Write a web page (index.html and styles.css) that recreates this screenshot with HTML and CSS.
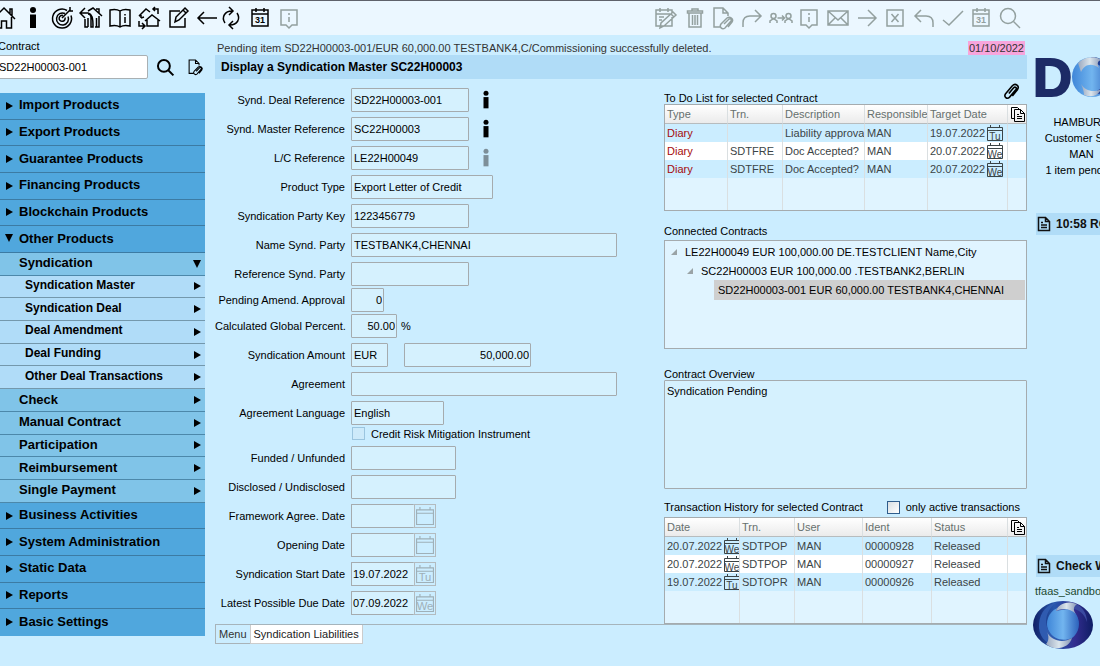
FILE: index.html
```html
<!DOCTYPE html>
<html lang="en">
<head>
<meta charset="utf-8">
<title>Display a Syndication Master</title>
<link rel="stylesheet" href="styles.css">
</head>
<body>
<svg class="sprite" aria-hidden="true">
  <symbol id="home" viewBox="0 0 24 24"><path d="M1 13 12 2l11 11M4.500 11v11h5v-7h5v7h5V11M18 8V3h2v7"/></symbol>
  <symbol id="info" viewBox="0 0 24 24"><g fill="currentColor" stroke="none"><circle cx="12" cy="4" r="3"/><path d="M9 8.500h6V22H9z"/></g></symbol>
  <symbol id="target" viewBox="0 0 24 24"><path d="M17 4.500a9.500 9.500 0 1 0 4 5M15 7.500a6 6 0 1 0 3 3M13 9.500a3 3 0 1 0 2 2M12 12l8-8M20 1v4h3"/></symbol>
  <symbol id="house-back" viewBox="0 0 24 24"><path d="M1 7h8c4 1 5 4 5 14h-2V12c0-2-1-4-3-4M6 2 1 7l5 5M9 5l5-3 9 8M6 13v8h3M9 12v9M20 10v11h-4M17.500 12v9M17 3h3v4"/></symbol>
  <symbol id="book" viewBox="0 0 24 24"><path d="M12 5C9 3 6 3 2 4v16c4-1 7-1 10 1 3-2 6-2 10-1V4c-4-1-7-1-10 1zm0 0v16M17 8v1.500M17 11v6"/></symbol>
  <symbol id="houses" viewBox="0 0 24 24"><path d="M4 12V9L2 10l7-7 4 3M4 12l3-1M16 3h5v5M18 1l-2 2 2 2M8 15l7-6 8 6M10 14v6h11v-6M2 15v5h5M5 17l3 3-3 3"/></symbol>
  <symbol id="edit" viewBox="0 0 24 24"><path d="M14 5H4v16h15v-9M9 16l1-5 9-9 3 3-9 9zM17 4l3 3"/></symbol>
  <symbol id="left" viewBox="0 0 24 24"><path d="M22 12H4M9 6l-6 6 6 6"/></symbol>
  <symbol id="right" viewBox="0 0 24 24"><path d="M3 12h18M13 4l8 8-8 8"/></symbol>
  <symbol id="refresh" viewBox="0 0 24 24"><path d="M6 17C2 11 6 5 13 5M10 1l4 4-4 4M18 7c4 6 0 12-7 12M14 15l-4 4 4 4"/></symbol>
  <symbol id="calendar" viewBox="0 0 24 24"><path d="M4 4h16v16H4zM4 8h16M8 2v4M16 2v4"/><text x="12" y="17" class="cal-num">31</text></symbol>
  <symbol id="note" viewBox="0 0 24 24"><path d="M4 4h16v15h-5l-3 3-3-3H4zM12 7v2M12 11v5"/></symbol>
  <symbol id="cal-edit" viewBox="0 0 24 24"><path d="M18 11v9H2V4h16v3M2 8h14M6 2v4M14 2v4M5 11h5M5 14h3M6 22l1-5L19 6l3 3L10 20zM17 8l3 3"/></symbol>
  <symbol id="trash" viewBox="0 0 24 24"><path d="M6 7h12v14H6zM4.500 5h15v2h-15zM9 5V3h6v2M9.500 9v10M12 9v10M14.500 9v10"/></symbol>
  <symbol id="doc-clip" viewBox="0 0 24 24"><path d="M9 21H3V2h9l5 5v3M12 2v5h5M13 18l5-5c2-1 3 1 2 2l-6 7c-3 2-6-1-4-4l6-6c3-2 7 1 5 4l-4 5"/></symbol>
  <symbol id="forward" viewBox="0 0 24 24"><path d="M3 21v-4c0-5 3-7 7-7h11M15 4l6 6-6 6"/></symbol>
  <symbol id="back" viewBox="0 0 24 24"><path d="M21 21v-4c0-5-3-7-7-7H3M9 4l-6 6 6 6"/></symbol>
  <symbol id="people" viewBox="0 0 24 24"><path d="M1 17v-2l3-2h1l3 2v2M16 17v-2l3-2h1l3 2v2M8.500 12h7M13 9.500l2.500 2.500-2.500 2.500"/><circle cx="4.500" cy="10" r="2.500"/><circle cx="19.500" cy="10" r="2.500"/></symbol>
  <symbol id="mail" viewBox="0 0 24 24"><path d="M2 5h20v14H2zM2 5l10 9L22 5M2 19l7-7M22 19l-7-7"/></symbol>
  <symbol id="close" viewBox="0 0 24 24"><path d="M4 4h16v16H4zM8.500 8l7 8M15.500 8l-7 8"/></symbol>
  <symbol id="check" viewBox="0 0 24 24"><path d="M2 14l6 5L22 5"/></symbol>
  <symbol id="search" viewBox="0 0 24 24"><circle cx="10" cy="10" r="7.500"/><path d="M15.500 15.500 22 22"/></symbol>
  <symbol id="clip" viewBox="0 0 18 18"><path d="M6.500 11 11 5.500c1.500-1.500 3.300 0 2.200 1.600l-6 7.200c-2.500 2.500-5.800-.3-3.800-3.200l6.400-7.600c3-3 7.200.3 4.800 3.800l-4.800 5.900"/></symbol>
  <symbol id="copy" viewBox="0 0 16 16"><path d="M4 12.500H1.500v-11h6l2 2M4.500 3.500h6l4 4v8h-10zM10.500 3.500v4h4M7 8.500h2M7 10.500h5M7 12.500h5"/></symbol>
  <symbol id="page" viewBox="0 0 16 16"><path d="M2.500 1.500h7l4 4v9h-11zM9.500 1.500v4h4M5 6.500h2M5 9h6M5 11.500h6"/></symbol>
  <symbol id="blank-day" viewBox="0 0 16 16"><path d="M.5 2.500h15v13H.5zM.5 5.500h15M3.500 0v3M12.500 0v3"/></symbol>
  <symbol id="tu" viewBox="0 0 16 16"><path d="M.5 2.500h15v13H.5zM.5 5.500h15M3.500 0v3M12.500 0v3"/><text x="8" y="14.500" class="cal-day">Tu</text></symbol>
  <symbol id="we" viewBox="0 0 16 16"><path d="M.5 2.500h15v13H.5zM.5 5.500h15M3.500 0v3M12.500 0v3"/><text x="8" y="14.500" class="cal-day">We</text></symbol>
</svg>
<svg class="paints" aria-hidden="true">
  <linearGradient id="globe-dark" x1="0" x2="1"><stop offset="0" stop-color="#101f66"/><stop offset=".35" stop-color="#2758ad"/><stop offset=".7" stop-color="#332d8f"/><stop offset="1" stop-color="#0e1d64"/></linearGradient>
  <linearGradient id="globe-light" x1="0" x2="1"><stop offset="0" stop-color="#3f86d8"/><stop offset=".5" stop-color="#72b5ef"/><stop offset="1" stop-color="#2c61bb"/></linearGradient>
  <linearGradient id="globe-silver" x1="0" x2="1"><stop offset="0" stop-color="#9aa8c0"/><stop offset=".5" stop-color="#dbe5ec"/><stop offset="1" stop-color="#8595b5"/></linearGradient>
  <symbol id="globe" viewBox="0 0 60 48" preserveAspectRatio="none">
    <ellipse cx="30" cy="24" rx="30" ry="24" fill="url(#globe-dark)"/>
    <ellipse cx="30" cy="23" rx="16" ry="17" fill="url(#globe-light)"/>
    <path d="M23 10C25 3 33 0 41 2c8 3 13 10 13 19-3-9-10-14-17-13-5 0-9 1-14 2z" fill="#3a4aa0"/>
    <path d="M23 10C25 3 34-1 44 3c-4 3-4 6-1 10-6-6-14-6-20-3z" fill="url(#globe-silver)"/>
    <path d="M25 1C14 7 10 20 16 30c4 8 14 11 23 7-3 6-9 9-16 8C12 43 5 34 6 23 7 11 14 3 25 1z" fill="#2f5bb0"/>
    <path d="M14 31c4 8 15 12 25 6-2 7-9 11-18 10-3-1-6-2-8-4 3-3 3-8 1-12z" fill="url(#globe-silver)"/>
  </symbol>
  <symbol id="brand-globe" viewBox="0 0 40 40">
    <circle cx="20" cy="20" r="20" fill="url(#globe-light)"/>
    <path d="M16 8C22 4 32 8 33 18s-4 14-12 18c14 4 19-8 19-16S32 0 20 0c-3 2-4 4-4 8z" fill="#1f3f94"/>
    <path d="M6 6C13-1 24-1 30 3c-5 1-5 4-3 8C19 5 12 8 9 15z" fill="url(#globe-silver)"/>
    <path d="M9 27c4 7 13 9 20 5-2 6-9 9-17 6 0-3-1-7-3-11z" fill="url(#globe-silver)"/>
  </symbol>
</svg>

<div class="shell">
  <header class="toolbar">
    <div class="tools">
      <button aria-label="Home"><svg><use href="#home"/></svg></button>
      <button aria-label="Information"><svg><use href="#info"/></svg></button>
      <button aria-label="Target"><svg><use href="#target"/></svg></button>
      <button aria-label="Return"><svg><use href="#house-back"/></svg></button>
      <button aria-label="Manual"><svg><use href="#book"/></svg></button>
      <button aria-label="Switch entity"><svg><use href="#houses"/></svg></button>
      <button aria-label="Edit"><svg><use href="#edit"/></svg></button>
      <button aria-label="Back"><svg><use href="#left"/></svg></button>
      <button aria-label="Refresh" class="close-up"><svg><use href="#refresh"/></svg></button>
      <button aria-label="Calendar"><svg><use href="#calendar"/></svg></button>
      <button aria-label="Note" class="muted"><svg><use href="#note"/></svg></button>
    </div>
    <div class="tools tools-end muted">
      <button aria-label="Edit diary"><svg><use href="#cal-edit"/></svg></button>
      <button aria-label="Delete"><svg><use href="#trash"/></svg></button>
      <button aria-label="Attach document"><svg><use href="#doc-clip"/></svg></button>
      <button aria-label="Forward"><svg><use href="#forward"/></svg></button>
      <button aria-label="Reassign"><svg><use href="#people"/></svg></button>
      <button aria-label="Note"><svg><use href="#note"/></svg></button>
      <button aria-label="Mail"><svg><use href="#mail"/></svg></button>
      <button aria-label="Next"><svg><use href="#right"/></svg></button>
      <button aria-label="Close"><svg><use href="#close"/></svg></button>
      <button aria-label="Undo"><svg><use href="#back"/></svg></button>
      <button aria-label="Confirm"><svg><use href="#check"/></svg></button>
      <button aria-label="Calendar"><svg><use href="#calendar"/></svg></button>
      <button aria-label="Search"><svg><use href="#search"/></svg></button>
    </div>
  </header>

  <div class="columns">
    <div class="sidebar">
      <label class="contract-label" for="contract">Contract</label>
      <div class="contract-row">
        <input id="contract" class="contract-input" value="SD22H00003-001">
        <button aria-label="Search contract"><svg class="icon-search"><use href="#search"/></svg></button>
        <button aria-label="Contract documents"><svg class="icon-doc"><use href="#doc-clip"/></svg></button>
      </div>
      <nav class="nav">
        <a href="#" class="top">Import Products</a>
        <a href="#" class="top">Export Products</a>
        <a href="#" class="top">Guarantee Products</a>
        <a href="#" class="top">Financing Products</a>
        <a href="#" class="top">Blockchain Products</a>
        <a href="#" class="top open">Other Products</a>
        <a href="#" class="sub open">Syndication</a>
        <a href="#" class="sub leaf">Syndication Master</a>
        <a href="#" class="sub leaf">Syndication Deal</a>
        <a href="#" class="sub leaf">Deal Amendment</a>
        <a href="#" class="sub leaf">Deal Funding</a>
        <a href="#" class="sub leaf">Other Deal Transactions</a>
        <a href="#" class="sub">Check</a>
        <a href="#" class="sub">Manual Contract</a>
        <a href="#" class="sub">Participation</a>
        <a href="#" class="sub">Reimbursement</a>
        <a href="#" class="sub">Single Payment</a>
        <a href="#" class="top">Business Activities</a>
        <a href="#" class="top">System Administration</a>
        <a href="#" class="top">Static Data</a>
        <a href="#" class="top">Reports</a>
        <a href="#" class="top">Basic Settings</a>
      </nav>
    </div>

    <main class="main">
      <div class="message"><span>Pending item SD22H00003-001/EUR 60,000.00 TESTBANK4,C/Commissioning successfully deleted.</span><span class="today">01/10/2022</span></div>
      <h1 class="title">Display a Syndication Master SC22H00003</h1>
      <div class="workspace">
        <form class="form">
          <div class="row"><label for="f1">Synd. Deal Reference</label><input id="f1" class="field w-ref" value="SD22H00003-001" readonly><button type="button" class="info-btn" aria-label="Deal information"><svg><use href="#info"/></svg></button></div>
          <div class="row"><label for="f2">Synd. Master Reference</label><input id="f2" class="field w-ref" value="SC22H00003" readonly><button type="button" class="info-btn" aria-label="Master information"><svg><use href="#info"/></svg></button></div>
          <div class="row"><label for="f3">L/C Reference</label><input id="f3" class="field w-ref" value="LE22H00049" readonly><button type="button" class="info-btn info-off" aria-label="L/C information"><svg><use href="#info"/></svg></button></div>
          <div class="row"><label for="f4">Product Type</label><select id="f4" class="field w-type"><option>Export Letter of Credit</option></select></div>
          <div class="row"><label for="f5">Syndication Party Key</label><input id="f5" class="field w-ref" value="1223456779" readonly></div>
          <div class="row"><label for="f6">Name Synd. Party</label><input id="f6" class="field w-wide" value="TESTBANK4,CHENNAI" readonly></div>
          <div class="row tight"><label for="f7">Reference Synd. Party</label><input id="f7" class="field w-ref" readonly></div>
          <div class="row tight"><label for="f8">Pending Amend. Approval</label><input id="f8" class="field w-count num" value="0" readonly></div>
          <div class="row"><label for="f9">Calculated Global Percent.</label><input id="f9" class="field w-pct num" value="50.00" readonly><span class="unit">%</span></div>
          <div class="row"><label for="f10">Syndication Amount</label><select id="f10" class="field w-cur"><option>EUR</option></select><input class="field w-amount num" aria-label="Amount" value="50,000.00" readonly></div>
          <div class="row"><label for="f11">Agreement</label><select id="f11" class="field w-wide"><option></option></select></div>
          <div class="row tight"><label for="f12">Agreement Language</label><select id="f12" class="field w-lang"><option>English</option></select></div>
          <div class="row check-row"><input type="checkbox" id="f13" class="tick tick-off"><label for="f13">Credit Risk Mitigation Instrument</label></div>
          <div class="row"><label for="f14">Funded / Unfunded</label><select id="f14" class="field w-fund"><option></option></select></div>
          <div class="row"><label for="f15">Disclosed / Undisclosed</label><select id="f15" class="field w-fund"><option></option></select></div>
          <div class="row"><label for="f16">Framework Agree. Date</label><input id="f16" class="field w-date" readonly><button type="button" class="day-btn" aria-label="Pick date"><svg><use href="#blank-day"/></svg></button></div>
          <div class="row"><label for="f17">Opening Date</label><input id="f17" class="field w-date" readonly><button type="button" class="day-btn" aria-label="Pick date"><svg><use href="#blank-day"/></svg></button></div>
          <div class="row"><label for="f18">Syndication Start Date</label><input id="f18" class="field w-date" value="19.07.2022" readonly><button type="button" class="day-btn" aria-label="Pick date"><svg><use href="#tu"/></svg></button></div>
          <div class="row"><label for="f19">Latest Possible Due Date</label><input id="f19" class="field w-date" value="07.09.2022" readonly><button type="button" class="day-btn" aria-label="Pick date"><svg><use href="#we"/></svg></button></div>
        </form>

        <div class="panels">
          <section>
            <div class="todo-head"><h2>To Do List for selected Contract</h2><button aria-label="Attachments"><svg class="icon-clip"><use href="#clip"/></svg></button></div>
            <table class="grid">
              <colgroup><col class="c63"><col class="c55"><col><col class="c63"><col class="c80"><col class="c18"></colgroup>
              <thead><tr><th>Type</th><th>Trn.</th><th>Description</th><th>Responsible</th><th>Target Date</th><th class="copy"><button aria-label="Copy list"><svg><use href="#copy"/></svg></button></th></tr></thead>
              <tbody>
                <tr><td class="diary">Diary</td><td></td><td>Liability approval</td><td>MAN</td><td><span class="date">19.07.2022<svg><use href="#tu"/></svg></span></td><td></td></tr>
                <tr><td class="diary">Diary</td><td>SDTFRE</td><td>Doc Accepted?</td><td>MAN</td><td><span class="date">20.07.2022<svg><use href="#we"/></svg></span></td><td></td></tr>
                <tr><td class="diary">Diary</td><td>SDTFRE</td><td>Doc Accepted?</td><td>MAN</td><td><span class="date">20.07.2022<svg><use href="#we"/></svg></span></td><td></td></tr>
                <tr class="empty"><td></td><td></td><td></td><td></td><td></td><td></td></tr>
                <tr class="empty"><td></td><td></td><td></td><td></td><td></td><td></td></tr>
              </tbody>
            </table>
          </section>

          <section class="contracts">
            <h2>Connected Contracts</h2>
            <ul class="tree">
              <li class="depth1"><svg class="twist" viewBox="0 0 6 6"><path d="M6 0v6H0z"/></svg>LE22H00049 EUR 100,000.00 DE.TESTCLIENT Name,City</li>
              <li class="depth2"><svg class="twist" viewBox="0 0 6 6"><path d="M6 0v6H0z"/></svg>SC22H00003 EUR 100,000.00 .TESTBANK2,BERLIN</li>
              <li class="depth3">SD22H00003-001 EUR 60,000.00 TESTBANK4,CHENNAI</li>
            </ul>
          </section>

          <section class="overview">
            <h2><label for="overview">Contract Overview</label></h2>
            <textarea id="overview" readonly>Syndication Pending</textarea>
          </section>

          <section class="history">
            <div class="history-head"><h2>Transaction History for selected Contract</h2><input type="checkbox" id="active" class="tick"><label for="active">only active transactions</label></div>
            <table class="grid">
              <colgroup><col class="c75"><col class="c55"><col><col class="c69"><col class="c76"><col class="c18"></colgroup>
              <thead><tr><th>Date</th><th>Trn.</th><th>User</th><th>Ident</th><th>Status</th><th class="copy"><button aria-label="Copy list"><svg><use href="#copy"/></svg></button></th></tr></thead>
              <tbody>
                <tr><td><span class="date">20.07.2022<svg><use href="#we"/></svg></span></td><td>SDTPOP</td><td>MAN</td><td>00000928</td><td>Released</td><td></td></tr>
                <tr><td><span class="date">20.07.2022<svg><use href="#we"/></svg></span></td><td>SDTPOP</td><td>MAN</td><td>00000927</td><td>Released</td><td></td></tr>
                <tr><td><span class="date">19.07.2022<svg><use href="#tu"/></svg></span></td><td>SDTOPR</td><td>MAN</td><td>00000926</td><td>Released</td><td></td></tr>
                <tr class="empty"><td></td><td></td><td></td><td></td><td></td><td></td></tr>
                <tr class="empty"><td></td><td></td><td></td><td></td><td></td><td></td></tr>
              </tbody>
            </table>
          </section>
        </div>
      </div>
      <div class="tabs"><button class="tab">Menu</button><button class="tab current">Syndication Liabilities</button></div>
    </main>

    <aside class="aside">
      <div class="aside-inner">
        <div class="brand"><span>D</span><svg><use href="#brand-globe"/></svg></div>
        <p class="who">HAMBURG<br>Customer Serv<br>MAN<br>1 item pending</p>
        <a href="#" class="aside-link"><svg><use href="#page"/></svg>10:58 RO</a>
        <div class="aside-foot">
          <a href="#" class="aside-link"><svg><use href="#page"/></svg>Check W</a>
          <div class="env">tfaas_sandbox</div>
          <svg class="globe"><use href="#globe"/></svg>
        </div>
      </div>
    </aside>
  </div>
</div>
</body>
</html>
```
FILE: styles.css
```css
* { box-sizing: border-box; }

body {
  margin: 0;
  overflow: hidden;
  background: #cbedff;
  color: #000;
  font: 11px/14px "Liberation Sans", Arial, sans-serif;
}

button {
  display: block;
  padding: 0;
  border: 0;
  background: none;
  color: inherit;
  font: inherit;
}

h1, h2, p, ul { margin: 0; padding: 0; }
h2 { font-size: 11px; font-weight: normal; line-height: 12px; white-space: nowrap; }

svg { display: block; fill: none; stroke: currentColor; stroke-width: 1.5; }
.sprite { display: none; }
.paints { position: absolute; width: 0; height: 0; }
.cal-num, .cal-day {
  fill: currentColor;
  stroke: none;
  text-anchor: middle;
  font-family: "Liberation Sans", sans-serif;
}
.cal-num { font-size: 9px; font-weight: bold; }
.cal-day { font-size: 10px; }

.shell { margin-left: -8px; min-height: 100vh; }

/* Toolbar */
.toolbar {
  display: flex;
  justify-content: space-between;
  align-items: center;
  height: 35px;
  padding-right: 78px;
  border-top: 1px solid #5e626b;
  background: #ebf7ff;
}
.tools { display: flex; gap: 5px; }
.tools-end { width: 368px; gap: 0; justify-content: space-between; }
.tools svg { width: 24px; height: 24px; }
.tools .close-up { margin-left: -5px; }
.muted { color: #93a09f; }

.columns {
  display: grid;
  grid-template-columns: 214px minmax(0, 1fr) 69px;
  min-height: calc(100vh - 35px);
}

/* Sidebar */
.sidebar { padding-top: 4px; }
.contract-label { display: block; margin: 0 0 2px 6px; line-height: 14px; }
.contract-row { display: flex; align-items: center; margin-bottom: 14px; }
.contract-input {
  width: 156px;
  height: 24px;
  margin-right: 8px;
  padding: 0 6px;
  border: 1px solid #a9b0b3;
  border-radius: 2px;
  font: inherit;
}
.icon-search { width: 19px; height: 19px; margin-right: 12px; stroke-width: 2.5; }
.icon-doc { width: 17px; height: 18px; }

.nav {
  display: flex;
  flex-direction: column;
  width: 213px;
  height: calc(100vh - 123px);
  min-height: 480px;
}
.nav a {
  display: flex;
  align-items: center;
  flex: 20 1 0;
  padding: 0 4px 2px 27px;
  border-bottom: 1px solid #4c88aa;
  background: #80c4e8;
  color: #000;
  font-size: 13px;
  font-weight: bold;
  line-height: 15px;
  text-decoration: none;
}
.nav .top { flex-grow: 24; padding-left: 14px; border-bottom-color: #3c7ba3; background: #50a7dd; }
.nav .leaf { padding-left: 33px; border-bottom-color: #7498ac; background: #b0dcf8; font-size: 12px; }
.nav a:last-child { border-bottom-color: #50a7dd; }
.nav a::before, .nav a::after {
  border: 4px solid transparent;
  border-left: 7px solid #000;
  border-right: 0;
}
.nav .top::before { content: ""; margin: 2px 6px 0 0; }
.nav .sub::after { content: ""; margin: 2px 0 0 auto; }
.nav .open::before, .nav .open::after {
  border: 4px solid transparent;
  border-top: 8px solid #000;
  border-bottom: 0;
}
.nav .top.open::before { margin: 0 6px 0 -1px; }

/* Main area */
.main { padding: 2px 4px 0 9px; }
.message {
  display: flex;
  justify-content: space-between;
  align-items: center;
  height: 18px;
  padding: 4px 2px 0;
  color: #333;
  white-space: nowrap;
}
.today { padding: 0 1px; background: #f7a5dc; }
.title {
  height: 24px;
  padding-left: 6px;
  background: #b0dcf7;
  font-size: 12px;
  line-height: 24px;
  white-space: nowrap;
}
.workspace {
  display: grid;
  grid-template-columns: minmax(0, 1fr) 363px;
  border-bottom: 1px solid #a6b4bb;
}

.form { padding-top: 9px; }
.row { display: flex; align-items: center; height: 23px; margin-bottom: 6px; white-space: nowrap; }
.row > label:first-child { width: 130px; margin-right: 6px; text-align: right; }
.row.tight { margin-bottom: 3px; }
.field {
  height: 24px;
  margin: 0;
  padding: 0 3px;
  border: 1px solid #a5abae;
  border-radius: 1px;
  background: #d5f1fe;
  color: #000;
  font: inherit;
  appearance: none;
}
.field, .day-btn { align-self: flex-start; }
select.field, .w-ref { padding: 0 2px; }
.num { padding: 0 1px; text-align: right; }
.w-ref { width: 118px; }
.w-type { width: 142px; }
.w-wide { width: 266px; padding: 0 2px; }
.w-count { width: 33px; }
.w-pct { width: 46px; }
.w-cur { width: 37px; margin-right: 16px; }
.w-amount { width: 127px; }
.w-lang { width: 93px; }
.w-fund { width: 105px; }
.w-date { width: 63px; padding: 0 1px; border-right: 0; }
.unit { margin-left: 4px; }
.info-btn { margin-left: 7px; }
.info-btn svg { width: 20px; height: 20px; }
.info-off { color: #7d8f99; }
.day-btn { width: 22px; height: 24px; padding: 1px; border: 1px solid #b3bbbf; color: #9fb0b8; }
.day-btn svg { width: 18px; height: 20px; stroke-width: 1; }
.row.check-row { height: 13px; padding-left: 137px; gap: 6px; }

.tick {
  width: 13px;
  height: 13px;
  margin: 0;
  border: 1px solid #2f5d8c;
  background: linear-gradient(135deg, #d8dfe3, #fff);
  appearance: none;
}
.tick-off { border-color: #9bc5df; background: #cdeafa; }

/* Right-hand panels */
.todo-head { display: flex; justify-content: space-between; align-items: flex-end; height: 25px; }
.icon-clip { width: 19px; height: 19px; margin: 0 6px 3px 0; }

.grid {
  width: 100%;
  table-layout: fixed;
  border-collapse: separate;
  border-spacing: 0;
  border: 1px solid #a5abae;
  background: #e0f4ff;
  color: #3b4446;
}
.grid th, .grid td {
  height: 18px;
  padding: 0 0 0 2px;
  border-right: 1px solid #dadfe1;
  overflow: hidden;
  font-weight: normal;
  line-height: 16px;
  text-align: left;
  white-space: nowrap;
}
.grid th {
  height: 19px;
  border-bottom: 1px solid #b7bcbe;
  background: linear-gradient(#fff, #ebebeb);
  color: #66706e;
}
.grid th:last-child, .grid td:last-child { border-right: 0; }
.grid tbody tr { background: #cbedff; }
.grid tbody tr:nth-child(2) { background: #fff; }
.grid tbody tr.empty { background: #e0f4ff; }
.grid tr.empty td { height: 16px; }
.grid .diary { color: #a50b0b; }
.copy svg { width: 16px; height: 16px; color: #000; stroke-width: 1; }
.date { display: flex; align-items: center; gap: 2px; }
.date svg { width: 16px; height: 16px; flex: none; stroke-width: 1; }
.c18 { width: 18px; }
.c55 { width: 55px; }
.c63 { width: 63px; }
.c69 { width: 69px; }
.c75 { width: 75px; }
.c76 { width: 76px; }
.c80 { width: 80px; }

.contracts { margin-top: 14px; }
.contracts h2 { padding-bottom: 3px; }
.tree {
  height: 109px;
  padding: 1px 1px 0 6px;
  border: 1px solid #a5abae;
  background: #e0f4ff;
  list-style: none;
}
.tree li { display: flex; align-items: center; gap: 8px; height: 19px; white-space: nowrap; }
.twist { width: 6px; height: 6px; fill: #9aa3a6; stroke: none; }
.depth2 { margin-left: 16px; }
.tree .depth3 { height: 20px; margin-left: 43px; padding-left: 4px; background: #cfcfcf; }

.overview { margin-top: 19px; }
.overview textarea {
  display: block;
  width: 100%;
  height: 109px;
  padding: 3px 2px;
  border: 1px solid #a5abae;
  border-radius: 1px;
  background: #d5f1fe;
  color: #000;
  font: inherit;
  resize: none;
}
.history { margin-top: 11px; }
.history-head { display: flex; align-items: center; height: 14px; margin-bottom: 3px; }
.history-head .tick { margin: 0 6px 0 auto; }
.history-head label { margin-right: 7px; }

.tabs { display: flex; }
.tab {
  height: 19px;
  padding: 0 3px;
  border: 1px solid #a9b3b8;
  border-width: 0 0 1px 1px;
  color: #333;
}
.tab.current { border: 1px solid #ccc; border-top: 0; background: #fff; color: #222; }

/* Status column */
.aside { display: flex; overflow: hidden; }
.aside-inner {
  display: flex;
  flex-direction: column;
  flex: none;
  width: 99px;
  padding: 19px 0 17px 2px;
}
.brand {
  display: flex;
  align-items: center;
  height: 46px;
  color: #1d2b66;
  font-size: 54px;
  font-weight: bold;
  line-height: 46px;
  -webkit-text-stroke: 2px #1d2b66;
}
.brand svg { width: 40px; height: 40px; flex: none; stroke: none; }
.who { margin: 14px 0 35px; text-align: center; line-height: 16px; white-space: nowrap; }
.aside-link {
  display: flex;
  align-items: center;
  gap: 4px;
  height: 22px;
  margin-left: 3px;
  background: #b0dcf7;
  color: #111;
  font-size: 12px;
  font-weight: bold;
  text-decoration: none;
  white-space: nowrap;
}
.aside-link svg { width: 16px; height: 16px; }
.aside-foot { margin-top: auto; }
.env { margin: 7px 0 3px 2px; color: #214a31; }
.globe { width: 60px; height: 48px; stroke: none; }
```
